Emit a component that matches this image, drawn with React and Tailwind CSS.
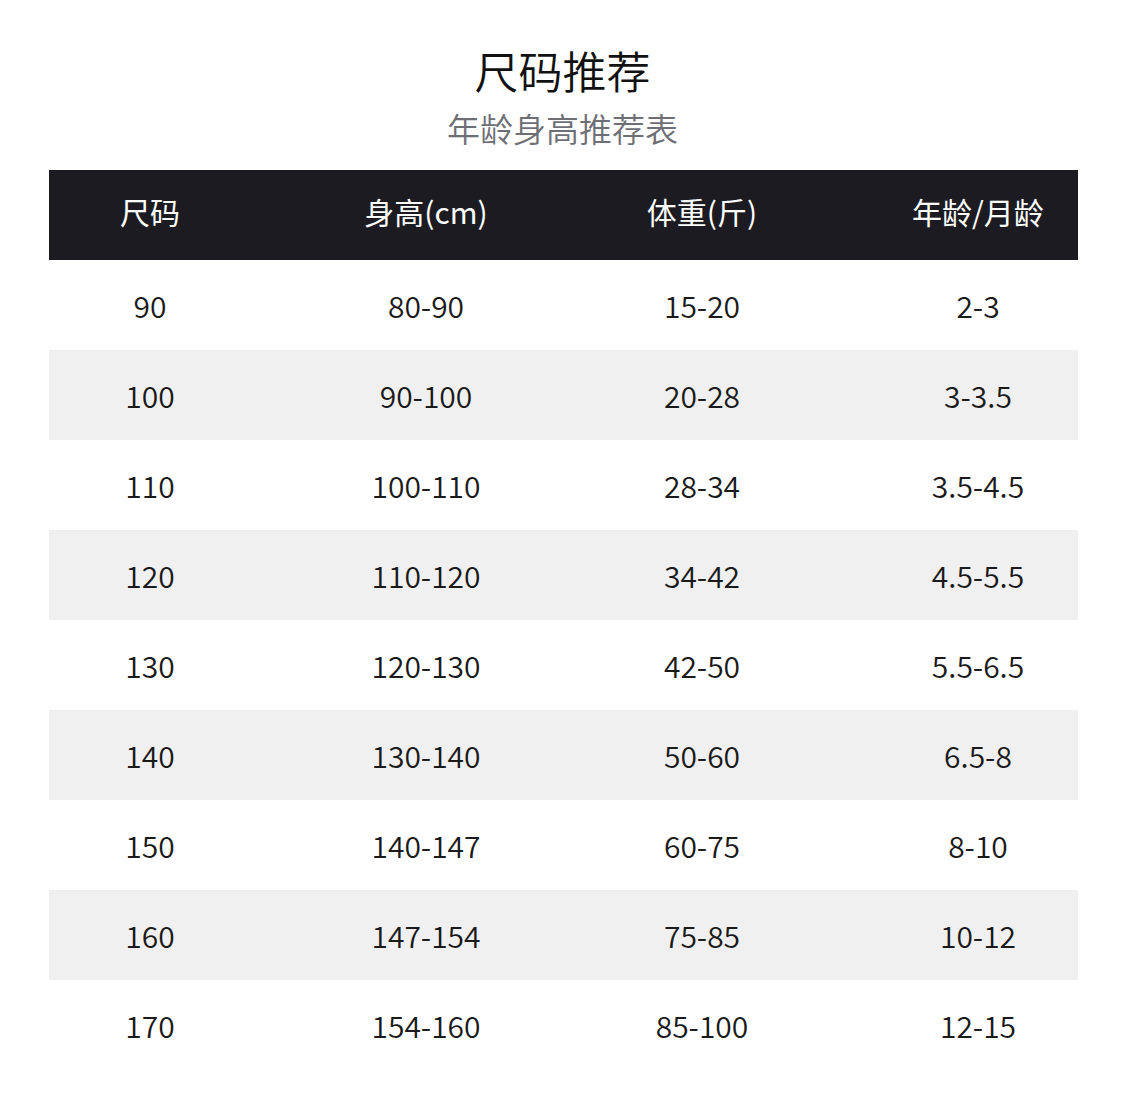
import React from 'react';

const headers = ['尺码', '身高(cm)', '体重(斤)', '年龄/月龄'];

const rows = [
  ['90', '80-90', '15-20', '2-3'],
  ['100', '90-100', '20-28', '3-3.5'],
  ['110', '100-110', '28-34', '3.5-4.5'],
  ['120', '110-120', '34-42', '4.5-5.5'],
  ['130', '120-130', '42-50', '5.5-6.5'],
  ['140', '130-140', '50-60', '6.5-8'],
  ['150', '140-147', '60-75', '8-10'],
  ['160', '147-154', '75-85', '10-12'],
  ['170', '154-160', '85-100', '12-15'],
];

const App = () => {
  return (
    <div
      className="w-[1125px] h-[1117px] bg-white"
      style={{ fontFamily: '"Noto Sans CJK SC", "Noto Sans", sans-serif' }}
    >
      {/* Title */}
      <div className="pt-[44px] flex flex-col items-center">
        <h1 className="text-[44px] leading-[52px] text-[#111] font-[350]">尺码推荐</h1>
        <p className="mt-[10px] text-[33px] leading-[44px] text-[#6e6f76] font-[350]">年龄身高推荐表</p>
      </div>

      {/* Table */}
      <div className="mt-[20px] ml-[49px] w-[1029px]">
        <div className="h-[90px] bg-[#1c1b22]">
          <div className="-ml-[37px] -mr-[38px] h-full pb-[8px] grid grid-cols-4 items-center">
            {headers.map((h) => (
              <div key={h} className="text-center text-white text-[30px] font-normal">
                {h}
              </div>
            ))}
          </div>
        </div>

        {rows.map((row, i) => (
          <div
            key={row[0]}
            className={`h-[90px] ${i % 2 === 1 ? 'bg-[#f0f0f0]' : 'bg-white'}`}
          >
            <div className="-ml-[37px] -mr-[38px] h-full grid grid-cols-4 items-center">
              {row.map((cell, j) => (
                <div key={j} className="text-center text-[#1a1a1a] text-[30px] font-[350]">
                  {cell}
                </div>
              ))}
            </div>
          </div>
        ))}
      </div>
    </div>
  );
};

export default App;
